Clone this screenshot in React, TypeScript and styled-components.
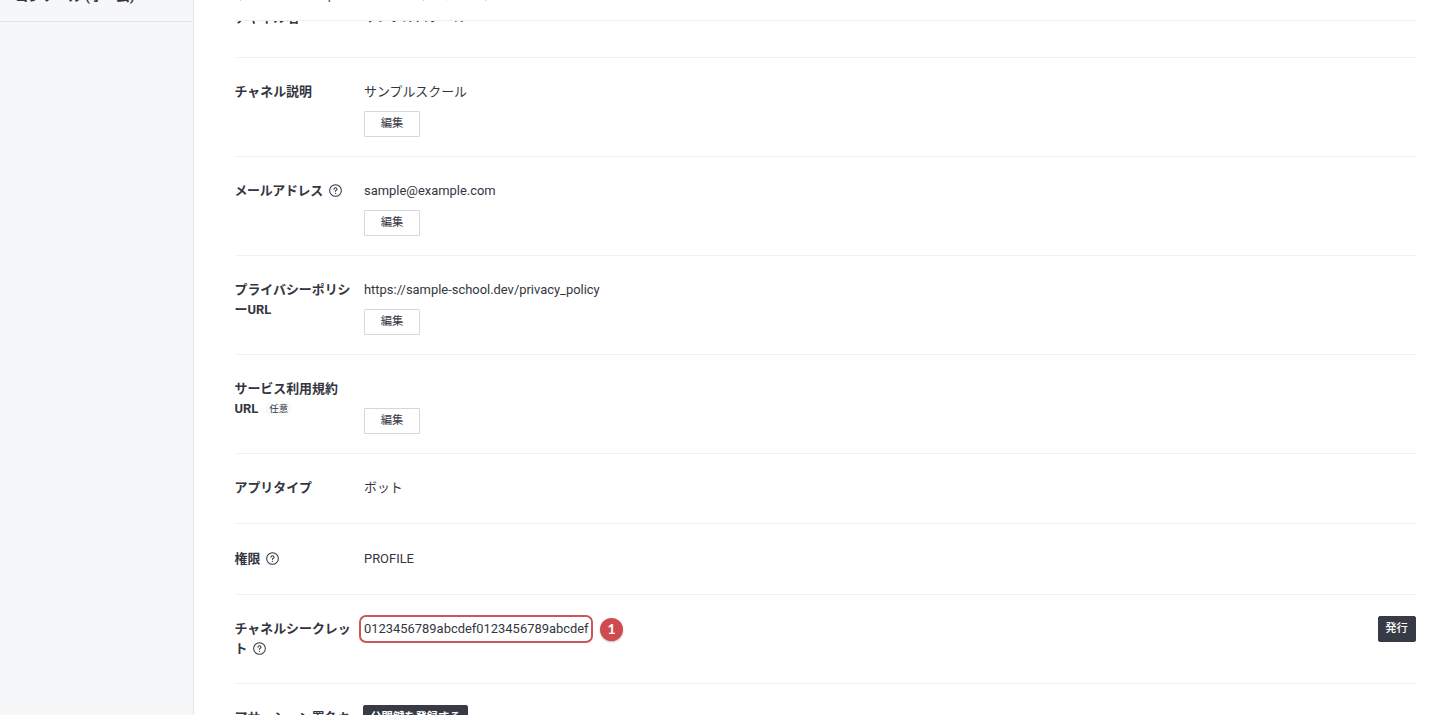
import React from "react";
import styled, { createGlobalStyle } from "styled-components";

const Global = createGlobalStyle`
  * { box-sizing: border-box; }
  html, body, #root { height: 100%; }
  body {
    margin: 0;
    overflow: hidden;
    background: #fff;
    color: #33363f;
    font-family: Roboto, "Noto Sans CJK JP", sans-serif;
    font-size: 12.93px;
    line-height: 20px;
  }
`;

const Page = styled.div`
  display: flex;
  height: 715px;
  overflow: hidden;
`;

const Sidebar = styled.nav`
  flex: 0 0 194px;
  background: #f6f7f9;
  border-right: 1px solid #e4e5e7;
`;

const SidebarItem = styled.div`
  display: flex;
  align-items: flex-end;
  height: 22px;
  padding-left: 15px;
  border-bottom: 1px solid #e2e3e6;
  font-size: 13.4px;
  font-weight: 700;
  span {
    margin-bottom: 14px;
    white-space: nowrap;
  }
`;

const Main = styled.main`
  flex: 1;
  min-width: 0;
  padding: 0 40.5px 0 40.5px;
`;

const Header = styled.header`
  display: flex;
  align-items: flex-end;
  height: 21px;
  border-bottom: 1px solid #f0f0f1;
  color: #4c4f57;
  span {
    margin-bottom: 15px;
    margin-right: 16px;
    white-space: nowrap;
  }
  span:nth-child(2) {
    margin-right: 30px;
  }
`;

const ClippedRow = styled.div`
  display: flex;
  align-items: flex-end;
  height: 37px;
  overflow: hidden;
  padding-bottom: 29px;
  border-bottom: 1px solid #f2f2f3;
`;

const ClippedValue = styled.div`
  height: 21px;
`;

const Row = styled.section<{ $height: number; $top?: number }>`
  display: flex;
  align-items: flex-start;
  height: ${(p) => p.$height}px;
  padding-top: ${(p) => p.$top ?? 24}px;
  border-bottom: 1px solid #f2f2f3;
`;

const Label = styled.div<{ $tight?: boolean }>`
  flex: 0 0 129.5px;
  font-weight: 700;
  letter-spacing: ${(p) => (p.$tight ? "-0.3px" : "normal")};
  white-space: nowrap;
`;

const Value = styled.div`
  flex: 1;
  min-height: 20px;
`;

const Text = styled.div`
  height: 20px;
`;

const Button = styled.button`
  display: block;
  height: 26px;
  width: 56px;
  padding: 0 0 1px;
  border: 1px solid #d5d7da;
  border-radius: 1px;
  background: #fff;
  color: #33363f;
  font-family: inherit;
  font-size: 11.3px;
  line-height: 16px;
  white-space: nowrap;
`;

const EditButton = styled(Button)`
  margin-top: 9px;
`;

const DarkButton = styled(Button)<{ $width: number }>`
  width: ${(p) => p.$width}px;
  padding-bottom: 0;
  border-color: #383b45;
  border-radius: 2px;
  background: #383b45;
  color: #fff;
  font-weight: 500;
`;

const IssueButton = styled(DarkButton)`
  margin-top: -3px;
`;

const RegisterButton = styled(DarkButton)`
  margin: -3px 0 0 -1px;
  font-weight: 700;
`;

const Optional = styled.span`
  display: inline-block;
  margin-left: 7px;
  padding: 0 4px;
  border-radius: 8px;
  background: #f8f9fb;
  font-size: 9.5px;
  font-weight: 400;
  line-height: 15px;
  vertical-align: 1px;
`;

const HelpIcon = styled.svg`
  width: 13px;
  height: 13px;
  margin-left: 6px;
  vertical-align: -2px;
`;

const SecretLine = styled.div`
  display: flex;
  align-items: center;
  height: 28px;
  margin: -4px 0 0 -5px;
`;

const Secret = styled.div`
  width: 234px;
  height: 28px;
  padding: 0 3px;
  border: 2px solid #cb565c;
  border-radius: 7px;
  line-height: 24px;
`;

const Badge = styled.div`
  width: 23px;
  height: 23px;
  margin-left: 7px;
  border-radius: 50%;
  background: #d04b50;
  box-shadow: 0 1px 2px rgba(0, 0, 0, 0.25);
  color: #fff;
  font-family: Lato, sans-serif;
  font-size: 14px;
  font-weight: 700;
  line-height: 22px;
  text-align: center;
`;

const Help = () => (
  <HelpIcon viewBox="0 0 12 12" fill="none" stroke="#33363f" strokeLinecap="round">
    <circle cx="6" cy="6" r="5.4" strokeWidth="0.95" />
    <path d="M4.6 4.8C4.6 3.1 7.4 3.1 7.4 4.8C7.4 5.8 6 5.8 6 6.8" strokeWidth="0.95" />
    <circle cx="6" cy="8.6" r="0.6" fill="#33363f" stroke="none" />
  </HelpIcon>
);

const Edit = () => <EditButton>編集</EditButton>;

export default function App() {
  return (
    <>
      <Global />
      <Page>
        <Sidebar>
          <SidebarItem><span>コンソール (ホーム)</span></SidebarItem>
        </Sidebar>
        <Main>
          <Header>
            <span>サンプル</span>
            <span>Sample School</span>
            <span>サンプルスクール</span>
          </Header>
          <ClippedRow>
            <Label>チャネル名</Label>
            <ClippedValue>サンプルスクール</ClippedValue>
          </ClippedRow>
          <Row $height={99}>
            <Label>チャネル説明</Label>
            <Value><Text>サンプルスクール</Text><Edit /></Value>
          </Row>
          <Row $height={99}>
            <Label $tight>メールアドレス<Help /></Label>
            <Value><Text>sample@example.com</Text><Edit /></Value>
          </Row>
          <Row $height={99}>
            <Label>プライバシーポリシ<br />ーURL</Label>
            <Value><Text>https://sample-school.dev/privacy_policy</Text><Edit /></Value>
          </Row>
          <Row $height={99}>
            <Label>サービス利用規約<br />URL<Optional>任意</Optional></Label>
            <Value><Text /><Edit /></Value>
          </Row>
          <Row $height={70}>
            <Label>アプリタイプ</Label>
            <Value>ボット</Value>
          </Row>
          <Row $height={71} $top={25}>
            <Label>権限<Help /></Label>
            <Value>PROFILE</Value>
          </Row>
          <Row $height={89}>
            <Label>チャネルシークレッ<br />ト<Help /></Label>
            <Value>
              <SecretLine>
                <Secret>0123456789abcdef0123456789abcdef</Secret>
                <Badge>1</Badge>
              </SecretLine>
            </Value>
            <IssueButton $width={38}>発行</IssueButton>
          </Row>
          <Row $height={90}>
            <Label>アサーション署名キ<br />ー</Label>
            <Value><RegisterButton $width={105}>公開鍵を登録する</RegisterButton></Value>
          </Row>
        </Main>
      </Page>
    </>
  );
}
